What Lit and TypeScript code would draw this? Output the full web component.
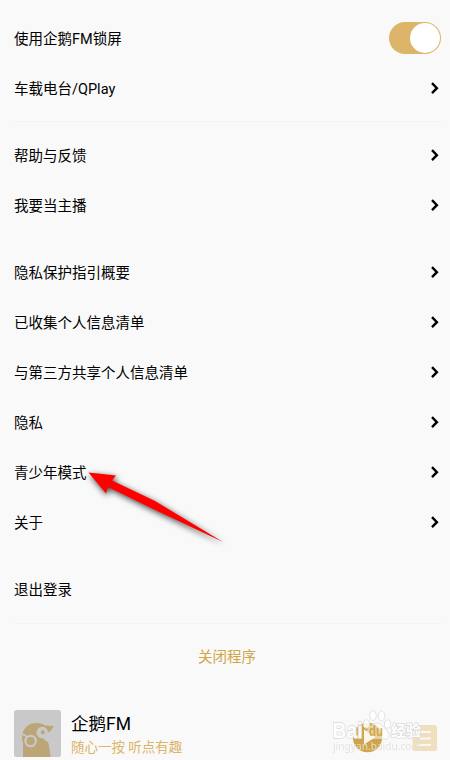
import { LitElement, html, css, svg } from "lit";
import { customElement, property } from "lit/decorators.js";

@customElement("setting-row")
class SettingRow extends LitElement {
  @property() label = "";
  @property() kind = "link";

  static styles = css`
    :host { display: flex; align-items: center; justify-content: space-between; height: 50px; padding: 0 9px 0 14px; }
    .label { font-size: 14.5px; line-height: 20px; padding-top: 3px; color: #000; white-space: nowrap; }
    .chevron { display: block; width: 10px; height: 14px; margin-right: 1px; }
    .switch { display: flex; justify-content: flex-end; box-sizing: border-box; width: 52px; height: 32px; padding: 1px; border-radius: 16px; background: #dcb568; }
    .knob { width: 30px; height: 30px; border-radius: 50%; background: #fff; }
  `;

  render() {
    return html`<span class="label">${this.label}</span>
      ${this.kind === "switch"
        ? html`<span class="switch"><span class="knob"></span></span>`
        : this.kind === "link"
        ? html`<svg class="chevron" viewBox="0 0 10 14"><path d="M2 2.2 6.9 7.2 2 12.2" fill="none" stroke="#000" stroke-width="2.4"/></svg>`
        : ""}`;
  }
}

@customElement("app-root")
class AppRoot extends LitElement {
  static styles = css`
    :host { display: block; position: relative; box-sizing: border-box; width: 450px; height: 760px; overflow: hidden; padding-top: 13px; background: #f9f9f9; font-family: Roboto, "Noto Sans CJK SC", sans-serif; }
    .gap { height: 17px; }
    .rule { box-sizing: border-box; height: 17px; padding: 8px 9px 0 14px; }
    .rule::before { content: ""; display: block; height: 1px; background: #f3f3f3; }
    .rule.low { padding-top: 9px; }
    .close { box-sizing: border-box; height: 52px; padding: 1px 0 0 4px; line-height: 52px; text-align: center; font-size: 14.5px; color: #cfa548; }
    .player { display: flex; align-items: flex-start; padding: 27px 0 0 14px; }
    .cover { display: block; width: 47px; height: 47px; }
    .meta { flex: 1; margin-left: 10px; padding-top: 1px; white-space: nowrap; }
    .title { font-size: 17.5px; line-height: 26px; color: #000; }
    .sub { font-size: 13.5px; line-height: 20px; color: #dcb568; }
    .controls { display: block; width: 130px; height: 54px; overflow: visible; }
    .arrow { position: absolute; left: 70px; top: 450px; width: 170px; height: 110px; overflow: visible; filter: drop-shadow(1px 2px 3px rgba(0,0,0,.75)); }
    .mark { paint-order: stroke; stroke: #dcdcdc; stroke-width: 1.8px; stroke-linejoin: round; fill: #fff; }
    .brand { font: bold 22px "Liberation Sans", sans-serif; }
    .du { font: bold 15px "Liberation Sans", sans-serif; fill: #cfa548; stroke: none; }
    .cn { font: bold 15px "Noto Sans CJK SC", sans-serif; }
    .url { font: 11px "Noto Sans", sans-serif; stroke: none; fill: #e4e2de; }
  `;

  rows(labels: string[]) {
    return labels.map((l) => html`<setting-row .label=${l}></setting-row>`);
  }

  render() {
    return html`
      <setting-row label="使用企鹅FM锁屏" kind="switch"></setting-row>
      <setting-row label="车载电台/QPlay"></setting-row>
      <div class="rule"></div>
      ${this.rows(["帮助与反馈", "我要当主播"])}
      <div class="gap"></div>
      ${this.rows(["隐私保护指引概要", "已收集个人信息清单", "与第三方共享个人信息清单", "隐私", "青少年模式", "关于"])}
      <div class="gap"></div>
      <setting-row label="退出登录" kind="plain"></setting-row>
      <div class="rule low"></div>
      <div class="close">关闭程序</div>
      <div class="player">
        <svg class="cover" viewBox="0 0 47 47">
          <rect width="47" height="47" rx="2.5" fill="#c9c9c9"/>
          <path d="M9 47V33C6.5 26 9 19 14 15.5C19 12.3 26 12.3 31 15.5L39.5 16C38.5 19 36.5 21.5 34 23C31.5 27 35.5 33 36.5 47Z" fill="#bca678"/>
          <circle cx="28.3" cy="22.6" r="5.8" fill="#c9c9c9"/>
          <path d="M28 27 34.5 22 36 30 33 32Z" fill="#c9c9c9"/>
          <circle cx="28.8" cy="22.2" r="2" fill="#bca678"/>
          <circle cx="16.6" cy="31" r="5.2" fill="#bca678" stroke="#c9c9c9" stroke-width="2.2"/>
          <path d="M7.5 24.5Q11 24 13 27.5" fill="none" stroke="#c9c9c9" stroke-width="1.5"/>
        </svg>
        <div class="meta">
          <div class="title">企鹅FM</div>
          <div class="sub">随心一按 听点有趣</div>
        </div>
        <svg class="controls" viewBox="320 706 130 54">
          <circle cx="367.5" cy="733.5" r="14.7" fill="#cfa548"/>
          <rect x="412.5" y="721" width="24.5" height="26" rx="2.5" fill="#efdfbf"/>
          <path d="M417 728H431M420 734.5H431M417 741H431" fill="none" stroke="#fbf8f2" stroke-width="2"/>
          <g opacity=".9">
            ${[[366.5, 720, 3.2, 4.2], [373, 711.5, 3.3, 5], [381.5, 712, 3.3, 5], [387.5, 720, 3.2, 4.2]].map(
              ([x, y, rx, ry]) => svg`<ellipse cx=${x} cy=${y} rx=${rx} ry=${ry} fill="#fff" stroke="#dedede"/>`
            )}
            <path d="M377 719C371 719 369 725 366 728C362 733 366 736 371 735C375 734 379 734 383 735C388 736 391 733 388 728C384 724 382 719 377 719Z" fill="#fff" fill-opacity=".55" stroke="#dedede"/>
            <path d="M364 725.5V740.5L375.5 733Z" fill="#fff"/>
            <text class="mark brand" x="332.5" y="733.5" textLength="30" lengthAdjust="spacingAndGlyphs">Bai</text>
            <text class="mark du" x="369" y="731.5" textLength="14" lengthAdjust="spacingAndGlyphs">du</text>
            <text class="mark cn" x="391" y="732">经验</text>
            <text class="mark url" x="333" y="746" textLength="88" lengthAdjust="spacingAndGlyphs">jingyan.baidu.com</text>
          </g>
        </svg>
      </div>
      <svg class="arrow" viewBox="70 450 170 110">
        <path d="M88.5 472.5 116 475.5 112 480.5 155 501 223 542 151 508 108 487 106 493.5Z" fill="#f00"/>
      </svg>
    `;
  }
}
